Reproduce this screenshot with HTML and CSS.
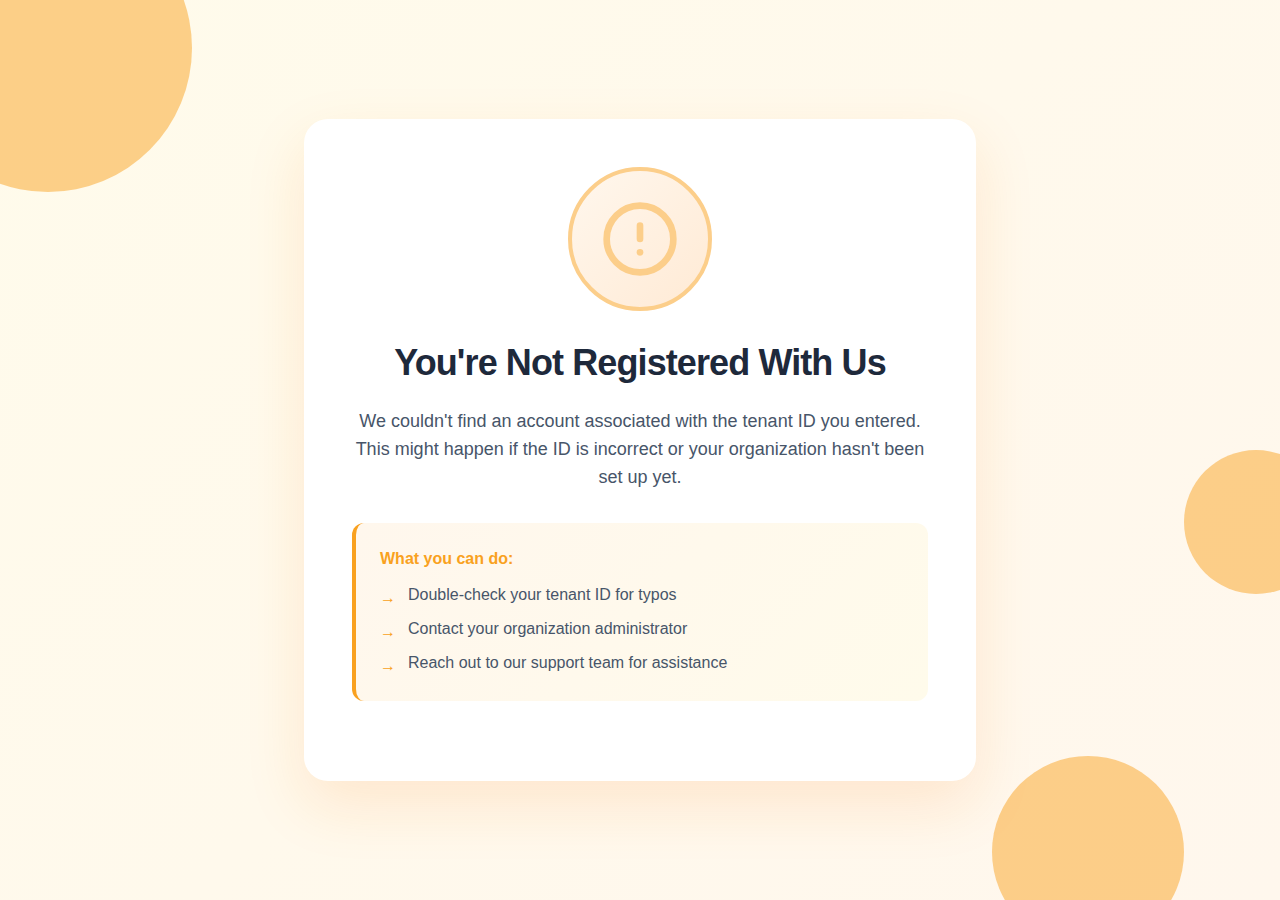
FILE: index.html
```
<!DOCTYPE html>
<html lang="en">
<head>
<meta charset="utf-8">
<meta name="viewport" content="width=device-width, initial-scale=1">
<title>You're Not Registered With Us</title>
<link rel="stylesheet" href="styles.css">
</head>

<body>
<div class="page">
	<!-- background circles -->
	<div class="circle circle-top"></div>
	<div class="circle circle-right"></div>
	<div class="circle circle-bottom"></div>

	<main class="card">
		<div class="icon">
			<svg width="80" height="80" viewBox="0 0 24 24" fill="none" stroke="currentColor" stroke-width="2" stroke-linecap="round" stroke-linejoin="round" aria-hidden="true">
				<circle cx="12" cy="12" r="10"/>
				<line x1="12" y1="8" x2="12" y2="12"/>
				<line x1="12" y1="16" x2="12.01" y2="16"/>
			</svg>
		</div>

		<h1 class="title">You're Not Registered With Us</h1>
		<p class="message">We couldn't find an account associated with the tenant ID you entered. This might happen if the ID is incorrect or your organization hasn't been set up yet.</p>

		<section class="help">
			<h2 class="help-title">What you can do:</h2>
			<ul class="help-list">
				<li><span class="arrow">→</span><span>Double-check your tenant ID for typos</span></li>
				<li><span class="arrow">→</span><span>Contact your organization administrator</span></li>
				<li><span class="arrow">→</span><span>Reach out to our support team for assistance</span></li>
			</ul>
		</section>
	</main>
</div>
</body>
</html>
```
FILE: styles.css
```
* {box-sizing: border-box; margin: 0; padding: 0}
body {font-family: "Liberation Sans", Arial, sans-serif; font-size: 16px; line-height: 24px; color: #475569}

.page {
	position: relative;
	display: flex;
	align-items: center;
	justify-content: center;
	min-height: 100vh;
	padding: 16px;
	overflow: hidden;
	background: linear-gradient(135deg, #fffbeb, #fff7ed);
}

/* decoration */
.circle {position: absolute; border-radius: 50%; background: #f9a323; opacity: 0.5}
.circle-top {top: -96px; left: -96px; width: 288px; height: 288px}
.circle-right {top: 50%; right: -48px; width: 144px; height: 144px}
.circle-bottom {bottom: -48px; right: 96px; width: 192px; height: 192px}

.card {
	position: relative;
	width: 100%;
	max-width: 672px;
	padding: 48px;
	border-radius: 24px;
	background: #ffffff;
	box-shadow: 0 24px 60px rgba(249, 125, 22, 0.14);
	text-align: center;
}

.icon {
	display: flex;
	align-items: center;
	justify-content: center;
	width: 144px;
	height: 144px;
	margin: 0 auto 32px;
	border: 4px solid #fcce8a;
	border-radius: 50%;
	background: linear-gradient(135deg, #fff7ed, #ffead5);
	color: #fcce8a;
}

.title {margin-bottom: 24px; font-size: 36px; line-height: 40px; font-weight: bold; letter-spacing: -0.025em; color: #1e293b}
.message {margin-bottom: 32px; font-size: 18px; line-height: 28px}

.help {
	margin-bottom: 32px;
	padding: 24px;
	border-left: 4px solid #f9a120;
	border-radius: 12px;
	background: linear-gradient(135deg, #fff7ed, #fffbeb);
	text-align: left;
}
.help-title {margin-bottom: 12px; font-size: 16px; line-height: 24px; font-weight: bold; color: #f9a120}
.help-list {display: flex; flex-direction: column; gap: 8px; list-style: none}
.help-list li {display: flex; gap: 12px}
.arrow {padding-top: 4px; line-height: 22px; color: #f9a120}
```
